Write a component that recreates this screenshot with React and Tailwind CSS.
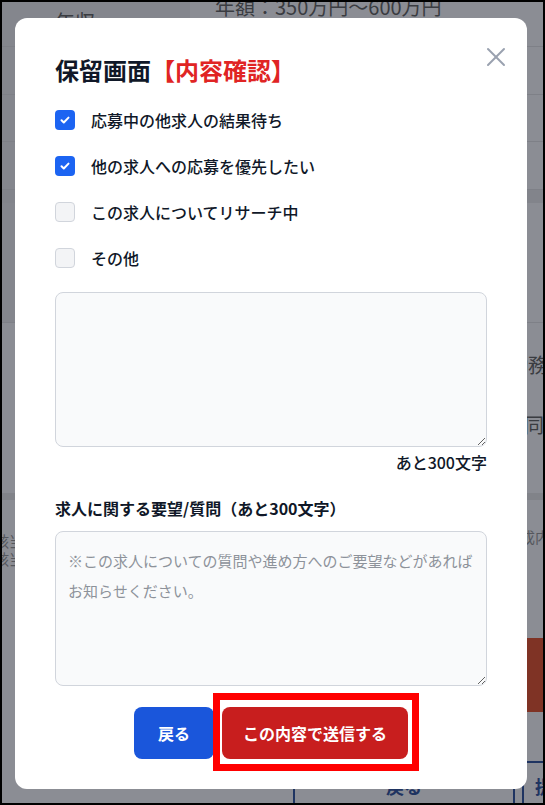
import { X } from "lucide-react";

const reasons = [
  { label: "応募中の他求人の結果待ち", checked: true },
  { label: "他の求人への応募を優先したい", checked: true },
  { label: "この求人についてリサーチ中", checked: false },
  { label: "その他", checked: false },
];

function Checkbox({ checked }) {
  if (checked) {
    return (
      <span className="w-5 h-5 rounded bg-[#1c64f2] flex items-center justify-center shrink-0">
        <svg className="w-3 h-3 text-white" viewBox="0 0 12 12" fill="none" stroke="currentColor">
          <path d="M2.5 6.2l2.3 2.3 4.7-4.9" strokeWidth={2} strokeLinecap="round" strokeLinejoin="round" />
        </svg>
      </span>
    );
  }
  return <span className="w-5 h-5 rounded border border-gray-300 bg-gray-100 shrink-0" />;
}

function Background() {
  // dimmed page behind the modal
  return (
    <div className="flex flex-col text-[#3a3c41] text-[20px] leading-7">
      <div className="h-[45px] flex border-b border-[#7e8087]">
        <div className="w-[188px] shrink-0 bg-[#84868d] pl-[53px] pt-[6px]">年収</div>
        <div className="flex-1 pl-[25px] -mt-[9px] whitespace-nowrap">年額：350万円～600万円</div>
      </div>
      <div className="h-[48px] flex border-b border-[#7e8087]">
        <div className="w-[188px] bg-[#84868d]" />
      </div>
      <div className="h-[47px] flex border-b border-[#7e8087]">
        <div className="w-[188px] bg-[#84868d]" />
      </div>
      <div className="h-[48px] flex border-b border-[#7e8087]">
        <div className="w-[188px] bg-[#84868d]" />
      </div>
      <div className="h-[13px] bg-[#82848b]" />
      <div className="h-[120px] flex border-b border-[#7e8087]">
        <div className="w-[188px] bg-[#84868d]" />
      </div>
      <div className="h-[170px] flex flex-col">
        <div className="pl-[506px] pt-[28px] whitespace-nowrap">勤務</div>
        <div className="pl-[522px] pt-[32px] whitespace-nowrap">同時</div>
      </div>
      <div className="h-[7px] bg-[#818389]" />
      <div className="h-[125px] flex text-[15px] leading-[18px] text-[#55575d]">
        <div className="w-[180px] shrink-0 -ml-[8px] pt-[32px] whitespace-nowrap">
          <div>該当</div>
          <div>該当</div>
        </div>
        <div className="pl-[331px] pt-[28px] whitespace-nowrap">作成内容</div>
      </div>
      <div className="h-[13px]" />
      <div className="h-[74px] flex">
        <div className="ml-[330px] flex-1 bg-[#7f3325]" />
      </div>
      <div className="h-[49px]" />
      <div className="flex gap-[7px] pl-[291px]">
        <div className="w-[222px] h-[50px] shrink-0 border-2 border-[#1f3461] rounded flex items-center justify-center text-[18px] font-bold text-[#1f3461]">
          戻る
        </div>
        <div className="w-[120px] h-[50px] shrink-0 border-2 border-[#1f3461] rounded pl-[11px] flex items-center text-[18px] font-bold text-[#1f3461] whitespace-nowrap">
          提出する
        </div>
      </div>
    </div>
  );
}

export default function App() {
  return (
    <div className="w-[545px] h-[805px] relative overflow-hidden border-2 border-black bg-[#8b8d94] font-['Noto_Sans_CJK_JP','Noto_Sans',sans-serif]">
      <Background />

      <div className="absolute left-[13px] top-[16px] w-[512px] h-[771px] bg-white rounded-xl px-10 pt-9">
        <button className="absolute right-[15px] top-[23px] text-gray-400">
          <X size={32} strokeWidth={1.5} />
        </button>

        <h2 className="text-2xl leading-8 font-bold text-gray-900">
          保留画面<span className="text-[#e02424]">【内容確認】</span>
        </h2>

        <div className="mt-[22px] flex flex-col gap-[22px]">
          {reasons.map((r) => (
            <label key={r.label} className="flex items-center gap-4">
              <Checkbox checked={r.checked} />
              <span className="text-base leading-6 font-medium text-gray-900">{r.label}</span>
            </label>
          ))}
        </div>

        <textarea
          className="mt-[22px] block w-full h-[155px] rounded-lg border border-gray-300 bg-gray-50 p-3 text-[15px] leading-[30px] text-gray-900 resize-y outline-none"
          defaultValue=""
        />
        <p className="mt-[3px] text-right text-base leading-6 font-medium text-gray-900">あと300文字</p>

        <p className="mt-[22px] text-base leading-6 font-semibold text-gray-900">求人に関する要望/質問（あと300文字）</p>
        <textarea
          className="mt-[11px] block w-full h-[155px] rounded-lg border border-gray-300 bg-gray-50 px-3 pt-[14px] pb-3 text-[15px] leading-[30px] text-gray-900 placeholder:text-[#8d929a] resize-y outline-none"
          placeholder="※この求人についての質問や進め方へのご要望などがあればお知らせください。"
        />

        <div className="mt-[21px] flex justify-center gap-2">
          <button className="h-[52px] px-6 rounded-lg bg-[#1a56db] text-white text-base font-bold">戻る</button>
          <div className="relative">
            <button className="h-[52px] px-[21px] rounded-lg bg-[#c81e1e] text-white text-base font-bold">
              この内容で送信する
            </button>
            <span className="absolute -left-[9px] -right-[11px] -top-[14px] -bottom-[12px] border-[7px] border-[#ff0000] pointer-events-none" />
          </div>
        </div>
      </div>
    </div>
  );
}
